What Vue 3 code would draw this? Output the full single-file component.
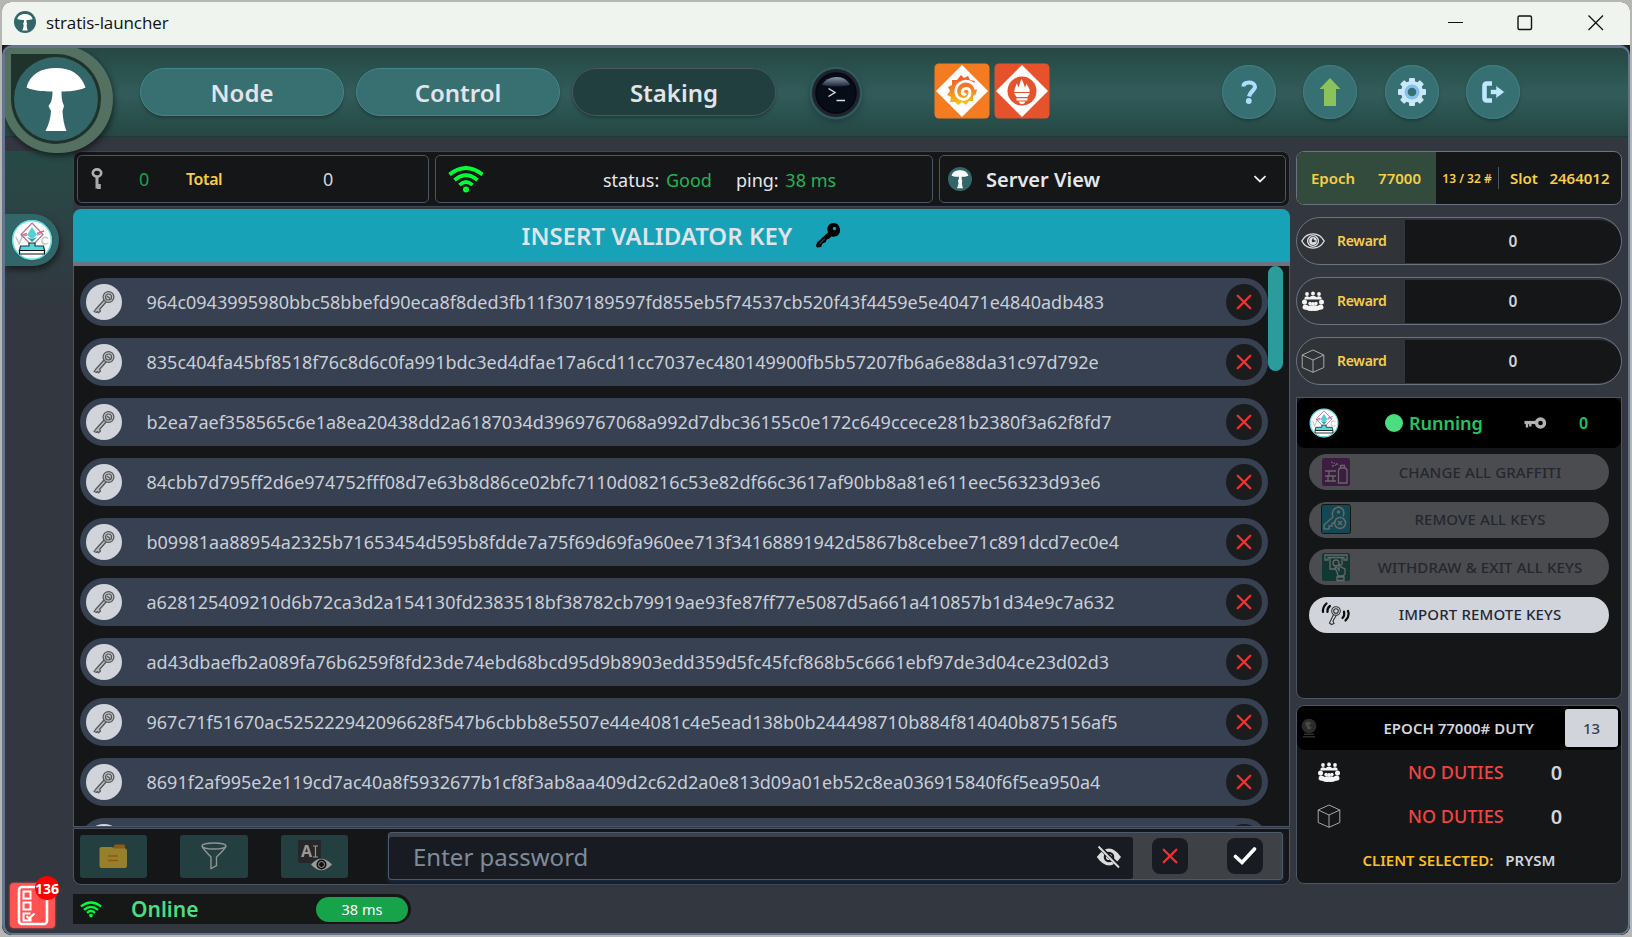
<script setup>
const keys = [
  '964c0943995980bbc58bbefd90eca8f8ded3fb11f307189597fd855eb5f74537cb520f43f4459e5e40471e4840adb483',
  '835c404fa45bf8518f76c8d6c0fa991bdc3ed4dfae17a6cd11cc7037ec480149900fb5b57207fb6a6e88da31c97d792e',
  'b2ea7aef358565c6e1a8ea20438dd2a6187034d3969767068a992d7dbc36155c0e172c649ccece281b2380f3a62f8fd7',
  '84cbb7d795ff2d6e974752fff08d7e63b8d86ce02bfc7110d08216c53e82df66c3617af90bb8a81e611eec56323d93e6',
  'b09981aa88954a2325b71653454d595b8fdde7a75f69d69fa960ee713f34168891942d5867b8cebee71c891dcd7ec0e4',
  'a628125409210d6b72ca3d2a154130fd2383518bf38782cb79919ae93fe87ff77e5087d5a661a410857b1d34e9c7a632',
  'ad43dbaefb2a089fa76b6259f8fd23de74ebd68bcd95d9b8903edd359d5fc45fcf868b5c6661ebf97de3d04ce23d02d3',
  '967c71f51670ac525222942096628f547b6cbbb8e5507e44e4081c4e5ead138b0b244498710b884f814040b875156af5',
  '8691f2af995e2e119cd7ac40a8f5932677b1cf8f3ab8aa409d2c62d2a0e813d09a01eb52c8ea036915840f6f5ea950a4',
  ''
]
const tabs = [
  { label: 'Node', active: false },
  { label: 'Control', active: false },
  { label: 'Staking', active: true }
]
const rewards = ['i-eye', 'i-group', 'i-cube']
const actions = [
  { label: 'CHANGE ALL GRAFFITI', icon: 'i-graffiti', off: true },
  { label: 'REMOVE ALL KEYS', icon: 'i-remove', off: true },
  { label: 'WITHDRAW & EXIT ALL KEYS', icon: 'i-withdraw', off: true },
  { label: 'IMPORT REMOTE KEYS', icon: 'i-remote', off: false }
]
</script>

<template>
  <div class="desktop">
    <svg class="defs" width="0" height="0">
      <defs>
        <linearGradient id="graf" x1="0" y1="0" x2="0" y2="1">
          <stop offset="0" stop-color="#ee5a2a" />
          <stop offset=".5" stop-color="#f1842a" />
          <stop offset="1" stop-color="#fbc70c" />
        </linearGradient>
        <linearGradient id="gloss" x1="0" y1="0" x2="0" y2="1">
          <stop offset="0" stop-color="#8d9bb0" />
          <stop offset="1" stop-color="#1b2433" />
        </linearGradient>
      </defs>
      <symbol id="i-shroom" viewBox="0 0 84 84">
        <circle cx="42" cy="42" r="42" fill="#336668" />
        <path fill="#fff" d="M12.500 30.500C16 17 27 11 42 11S67 17 71.500 30.500C64 34 55 34.500 47.500 34.500 47.500 39 48 43 48.500 45 L50 49 48.500 54C49 62 50 68 52.500 74H31.500C34.500 68 36.500 62 37 54L34.500 49 37 45C38 42 38.500 38 38.500 34.500 29 34.500 20 34 12.500 30.500Z" />
      </symbol>
      <symbol id="i-wifi" viewBox="0 0 36 27">
        <g fill="none" stroke="#0f3" stroke-width="3.700">
          <path d="M1.500 8.500Q18-4.500 34.500 8.500" />
          <path d="M6.500 14Q18 4.500 29.500 14" />
          <path d="M11.500 19Q18 13 24.500 19" />
        </g>
        <circle cx="18" cy="23.500" r="3" fill="#0f3" />
      </symbol>
      <symbol id="i-key" viewBox="0 0 24 24">
        <g fill="#b9bcc2" stroke="#555" stroke-width="1.200" stroke-linejoin="round">
          <path d="M12.500 9.500 14.500 11.500 7.500 19.500 8.500 21 6.500 22.800 5.500 21.500 4.500 22.500 2 21.500 3.500 19.500Z" />
          <circle cx="16.500" cy="7" r="5.400" />
          <circle cx="16.500" cy="7" r="3" fill="#c6c9cf" />
          <path d="M15 6 18 8.500" />
        </g>
      </symbol>
      <symbol id="i-vkey" viewBox="0 0 12 22">
        <path d="M6 8V20.500" stroke="#a9a9a9" stroke-width="3" fill="none" />
        <path d="M6 18.500h3.800" stroke="#a9a9a9" stroke-width="5" />
        <ellipse cx="6" cy="5" rx="4.200" ry="3.600" fill="none" stroke="#b0b0b0" stroke-width="2.600" />
      </symbol>
      <symbol id="i-hkey" viewBox="0 0 22 12">
        <path d="M.5 5.500H13" stroke="#b3b3b3" stroke-width="3.200" />
        <path d="M3 6v4.500M6.300 6v3.500" stroke="#b3b3b3" stroke-width="2.400" />
        <circle cx="16.500" cy="6" r="4" fill="none" stroke="#b3b3b3" stroke-width="3.400" />
      </symbol>
      <symbol id="i-x" viewBox="0 0 16 16">
        <path d="M1.700 1.700 14.300 14.300M14.300 1.700 1.700 14.300" stroke="#f5302f" stroke-width="2.300" fill="none" stroke-linecap="round" />
      </symbol>
      <symbol id="i-client" viewBox="0 0 42 42">
        <circle cx="21" cy="21" r="20.500" fill="#1c2c2e" />
        <circle cx="21" cy="21" r="19.400" fill="#fff" stroke="#62e0e2" stroke-width="1.600" />
        <path d="M21 4 32 15.500 21 27 10 15.500Z" fill="#fff" stroke="#b1748c" stroke-width="1.200" />
        <path d="M21 8 26 16 21 20 16 16Z" fill="#54cfd6" />
        <path d="M10 16.500 16 14.500M26 14.500 33 12" stroke="#d76b86" stroke-width="1.500" />
        <path d="M10.500 18 16 16M26 16 31 14.500" stroke="#8d8be0" stroke-width="1.200" />
        <path d="M16 18 21 23 26 18 21 20Z" fill="#2f9ea8" />
        <path d="M5 18 8 25 11 18M37 19.500c-4-3-6.500 0-6 3s3.500 3.500 6 1.500" fill="none" stroke="#c5c8cb" stroke-width="1.600" />
        <path d="M18 24h6v3h8.500l1 4.500h-25l1-4.500H18Z" fill="#55d9dc" stroke="#15383c" stroke-width="1.200" />
        <path d="M8.500 31.500h25v3.500h-25Z" fill="#fff" stroke="#111" stroke-width="1.200" />
      </symbol>
      <symbol id="i-eye" viewBox="0 0 24 24">
        <g fill="none" stroke="#dcdde0" stroke-width="1.400">
          <path d="M.8 12C6 2.500 18 2.500 23.200 12 18 21.500 6 21.500.8 12Z" />
          <circle cx="12" cy="12" r="5.400" />
          <circle cx="12" cy="12" r="2.600" stroke-width="2.600" />
        </g>
        <path d="M12 12V9.500M12 12h2.500" stroke="#303338" stroke-width="1.500" />
      </symbol>
      <symbol id="i-group" viewBox="0 0 24 24">
        <g fill="#f4f4f4">
          <circle cx="6" cy="5" r="1.900" /><circle cx="12" cy="4.500" r="1.900" /><circle cx="18" cy="5" r="1.900" />
          <path d="M3.500 10.500V8.500Q6 6 8.500 8.200 12 5.500 15.500 8.200 18 6 20.500 8.500V10.500Z" />
          <circle cx="3.500" cy="13" r="2.500" /><circle cx="20.500" cy="13" r="2.500" />
          <circle cx="9" cy="14.500" r="1.700" /><circle cx="15" cy="14.500" r="1.700" /><circle cx="12" cy="15" r="2" />
          <path d="M1.500 19Q1.500 15.500 4 15.500T7.500 17Q10 15.500 12 17.200 14 15.500 16.500 17 17.500 15.500 20 15.500T22.500 19Q22 21 19 20.800 15 22.500 12 21.800 9 22.500 5 20.800 2 21 1.500 19Z" />
        </g>
      </symbol>
      <symbol id="i-cube" viewBox="0 0 24 24">
        <g fill="none" stroke="#b4b6b9" stroke-width=".9" stroke-linejoin="round">
          <path d="M12 1 22.800 6V18.500L12 23.300 1.200 18.500V6Z" />
          <path d="M1.200 6 12 11 22.800 6M12 11V23.300" />
        </g>
      </symbol>
      <symbol id="i-graffiti" viewBox="0 0 30 30">
        <rect x="1" y="1" width="28" height="28" rx="2.500" fill="#84318a" />
        <g fill="none" stroke="#eee" stroke-width="1.300">
          <path d="M17.500 14Q17.500 11 20 11H23Q26 11 26 14V26H17.500ZM19.500 11V8.500h4V11" />
          <path d="M4 14h11M4 19h11M4 24h11M8 14v5M12 19v5M7 19v5" />
          <path d="M10 5l4 1.500M11 9l4-1M15 7h3" stroke-dasharray="2 1" />
        </g>
      </symbol>
      <symbol id="i-remove" viewBox="0 0 30 30">
        <rect x=".5" y=".5" width="29" height="29" rx="2" fill="#179fbd" stroke="#222" />
        <g fill="none" stroke="#eee" stroke-width="1.500" stroke-linejoin="round">
          <path d="M12 13Q10 7 14 4.500 18 1.500 21.500 5 24 8.500 22 12.500M12 13 3 21V25H8V22H11V19.500L14.500 18" />
          <circle cx="19" cy="19" r="5.500" />
          <path d="M17 17l4 4M21 17l-4 4" /><circle cx="17.500" cy="8" r="1" />
        </g>
      </symbol>
      <symbol id="i-withdraw" viewBox="0 0 30 30">
        <rect x="1" y="1" width="28" height="28" rx="2.500" fill="#17786a" />
        <g fill="none" stroke="#eee" stroke-width="1.300">
          <path d="M4 3H26V8H23V5.500H7V8H4ZM9 6V17H15M21 6V13" />
          <circle cx="15" cy="11" r="3" />
          <path d="M16 20 14 16Q15 14 18 18V13Q20 12 20 15L24 17V22L22 24H17ZM16 25h7v3.500h-7Z" />
        </g>
      </symbol>
      <symbol id="i-remote" viewBox="0 0 30 30">
        <g fill="none" stroke="#0b0b0b" stroke-linecap="round">
          <path d="M5.500 4.500Q1.500 8 2 13" stroke-width="2.200" />
          <path d="M9 7Q6 9 6.500 13" stroke-width="2.200" />
          <path d="M23 12.500Q24 16.500 21.500 19" stroke-width="2.200" />
          <path d="M27 12Q29 17 24.500 21.500" stroke-width="2.200" />
        </g>
        <g fill="#d1d5db" stroke="#333" stroke-width="1.100">
          <path d="M13 14.500 8.500 24 10.500 25.500 13 24.500 12 22 15.500 16Z" />
          <circle cx="15" cy="12" r="4.300" /><circle cx="15" cy="12" r="2.300" />
        </g>
      </symbol>
    </svg>

    <div class="window">
      <header class="titlebar">
        <svg class="ticon"><use href="#i-shroom" /></svg>
        <span class="tname">stratis-launcher</span>
        <svg class="winbtns" viewBox="0 0 160 20">
          <path d="M0 9.500H15" stroke="#111" stroke-width="1.200" />
          <rect x="70" y="3" width="13.500" height="13.500" rx="1.500" fill="none" stroke="#111" stroke-width="1.400" />
          <path d="M140.500 2.500 155 17M155 2.500 140.500 17" stroke="#111" stroke-width="1.300" />
        </svg>
      </header>

      <div class="app">
        <nav class="topnav">
          <div class="tabs">
            <button v-for="t in tabs" :key="t.label" class="tab" :class="{ active: t.active }">{{ t.label }}</button>
          </div>
          <svg class="term" viewBox="0 0 56 62">
            <circle cx="28" cy="28" r="26.500" fill="#2d5c5a" />
            <circle cx="28" cy="28" r="24" fill="#20222f" />
            <circle cx="28" cy="28" r="20" fill="#070d18" stroke="#05070d" stroke-width="1.500" />
            <path d="M14 20Q18 12.500 28 12T42 20Q28 23 14 20Z" fill="url(#gloss)" />
            <path d="M20.500 23.500 27 27.500 20.500 31.500M28.500 35.500h8.500" fill="none" stroke="#ddd" stroke-width="1.400" />
          </svg>
          <svg class="mon" viewBox="0 0 116 56">
            <rect x=".5" y=".5" width="55" height="55" rx="4.500" fill="#f47b20" />
            <path d="M28 2 54 28 28 54 2 28Z" fill="#fff" />
            <path d="M27 12 30 15 34 13 36 17 41 18 39 22 43 26 42 31 39 33 39 38 35 38 32 42 28 39 24 42 21 39 16 39 17 34 13 32 16 28 14 24 18 22 18 17 23 17Z" fill="url(#graf)" />
            <path d="M42 26.500C40 18 31 16 25.500 20.500S21 33 26 35.500 36 34.500 36 29.500 30 24 28.500 28 31 31.500 32 30.500" fill="none" stroke="#fff" stroke-width="2.800" />
            <rect x="60.500" y=".5" width="55" height="55" rx="4.500" fill="#e6522c" />
            <path d="M88 2 114 28 88 54 62 28Z" fill="#fff" />
            <circle cx="88" cy="28" r="14.500" fill="#e6522c" />
            <path d="M80.500 29C80 25 82 24 82.500 20.500 84 22 84.500 24 84.500 25 85.500 22 86 19 87.500 16 89.500 19 90 22 91 24.500 91.500 23 92 22 93 20.500 93 24 96.500 25 95.500 29Z" fill="#fff" />
            <path d="M80 30H96L93.500 34H82.500ZM82.500 35.200h11v2.200h-11ZM84.500 38.500h7Q90.500 41 88 41T84.500 38.500Z" fill="#fff" />
          </svg>
          <div class="rounds">
            <div class="round">
              <svg viewBox="0 0 54 54"><path d="M21.500 21.500C21.500 18.500 24 17.500 27 17.500S33 19 33 22 28.500 26 27 31.500" fill="none" stroke="#b0dcff" stroke-width="4.200" /><circle cx="26.800" cy="36" r="2.900" fill="#b0dcff" /></svg>
            </div>
            <div class="round">
              <svg viewBox="0 0 54 54"><path d="M27 13 37.500 24H33V41H21V24H16.500Z" fill="#8bc25a" /></svg>
            </div>
            <div class="round">
              <svg viewBox="0 0 54 54">
                <g fill="#cbe7fb"><circle cx="27" cy="27" r="11" />
                  <rect v-for="a in 4" :key="a" x="24" y="13" width="6" height="28" rx="1" :transform="`rotate(${a * 45} 27 27)`" />
                </g>
                <circle cx="27" cy="27" r="7.500" fill="#7fc3ee" /><circle cx="27" cy="27" r="4.300" fill="#377072" />
              </svg>
            </div>
            <div class="round">
              <svg viewBox="0 0 54 54"><path d="M26 18.500H21Q18.500 18.500 18.500 21V33Q18.500 35.500 21 35.500H26" fill="none" stroke="#bfe8ff" stroke-width="4.600" /><path d="M24.500 24.500H30V20.500L38.500 27 30 33.500V29.500H24.500Z" fill="#bfe8ff" stroke="#377072" stroke-width=".6" /></svg>
            </div>
          </div>
        </nav>
        <div class="biglogo"><div class="leaf"><svg><use href="#i-shroom" /></svg></div></div>

        <div class="body">
          <aside class="side">
            <div class="sidebadge"><svg><use href="#i-client" /></svg></div>
          </aside>

          <main class="main">
            <section class="stats">
              <div class="box b1">
                <svg class="vkey"><use href="#i-vkey" /></svg>
                <span class="g">0</span><span class="y">Total</span><span class="z">0</span>
              </div>
              <div class="box b2">
                <svg class="wifi"><use href="#i-wifi" /></svg>
                <p class="st">status: <b>Good</b></p>
                <p>ping: <b>38 ms</b></p>
              </div>
              <div class="box b3">
                <svg class="slogo"><use href="#i-shroom" /></svg>
                <span>Server View</span>
                <svg class="chev" viewBox="0 0 14 8"><path d="M1.500 1.200 7 6.500 12.500 1.200" fill="none" stroke="#eee" stroke-width="1.800" /></svg>
              </div>
            </section>

            <div class="insert">
              <span>INSERT VALIDATOR KEY</span>
              <svg viewBox="0 0 26 26">
                <path d="M2 20.500 13 10.500C11 5 14 1 18.500 1S25 4.500 25 8.500 21.500 15.500 16.500 14.500L13.500 17 11.500 17.500 11 20 7.500 21.500 6 25 2 25.500 1 24Z" fill="#000" />
                <circle cx="19.500" cy="6.500" r="1.700" fill="#17a2b8" /><path d="M4 22.500 10 16.500" stroke="#17a2b8" stroke-width=".8" />
              </svg>
            </div>

            <section class="list">
              <div class="rows">
                <div v-for="(k, i) in keys" :key="i" class="row">
                  <div class="kicon"><svg><use href="#i-key" /></svg></div>
                  <span>{{ k }}</span>
                  <div class="xicon"><svg><use href="#i-x" /></svg></div>
                </div>
              </div>
              <div class="thumb"></div>
            </section>

            <section class="bar">
              <div class="tool">
                <svg viewBox="0 0 68 43"><path d="M33 13 35 9.500H44Q45 9.500 45 11V14H33Z" fill="#8f5a16" /><path d="M19.500 14Q19.500 12 21.500 12H32L34 13.500H45Q47 13.500 47 15.500V31Q47 33 45 33H21.500Q19.500 33 19.500 31Z" fill="#96802c" /><path d="M28 21h10M28 25.500h10" stroke="#8a5a16" stroke-width="1.600" /></svg>
              </div>
              <div class="tool wide">
                <svg viewBox="0 0 68 43"><g fill="none" stroke="#8f9494" stroke-width="1.400"><ellipse cx="34" cy="11" rx="12" ry="3" /><path d="M22 11Q23 14 31 22V33.500L36.500 30.500V22Q45 14 46 11" /></g></svg>
              </div>
              <div class="tool">
                <svg viewBox="0 0 68 43"><rect x="17" y="5" width="23" height="23" rx="2" fill="#252728" /><path d="M32 11h5M34.500 11V22M32 22h5" stroke="#999" stroke-width="1.200" /><path d="M30 29.500Q40 18 51 29.500 40 41 30 29.500Z" fill="#9b9b9b" /><circle cx="40.500" cy="29.500" r="5" fill="#111" /><circle cx="40.500" cy="29.500" r="3" fill="none" stroke="#999" /></svg>
                <span>A</span>
              </div>
              <div class="pw">
                <div class="field">
                  <span>Enter password</span>
                  <svg viewBox="0 0 26 24"><path d="M.8 12Q7 3.500 13 3.500T25 12Q19 20.500 13 20.500T.8 12Z" fill="#dcdcdc" /><circle cx="13" cy="12" r="4.200" fill="none" stroke="#181c22" stroke-width="2.200" /><path d="M2.500 1 24 22" stroke="#181c22" stroke-width="4" /><path d="M2.500 1.500 23 22.500" stroke="#dcdcdc" stroke-width="1.900" /></svg>
                </div>
                <div class="pbtn"><svg class="px"><use href="#i-x" /></svg></div>
                <div class="pbtn ok"><svg viewBox="0 0 24 20"><path d="M2.500 10.500 9 16.500 21.500 3" fill="none" stroke="#fff" stroke-width="3.600" stroke-linecap="round" /></svg></div>
              </div>
            </section>

            <footer class="foot">
              <svg><use href="#i-wifi" /></svg>
              <span>Online</span>
              <div class="pill">38 ms</div>
            </footer>
          </main>

          <aside class="right">
            <div class="epoch">
              <div class="ep1"><span>Epoch</span><span>77000</span></div>
              <div class="ep2">13 / 32 #</div>
              <div class="ep3"><span>Slot</span><span>2464012</span></div>
            </div>
            <div v-for="r in rewards" :key="r" class="reward">
              <div class="rl"><svg><use :href="'#' + r" /></svg><span>Reward</span></div>
              <div class="rv">0</div>
            </div>
            <section class="panel">
              <div class="phead">
                <svg class="cl"><use href="#i-client" /></svg>
                <i class="dot"></i><span class="run">Running</span>
                <svg class="hk"><use href="#i-hkey" /></svg>
                <span class="cnt">0</span>
              </div>
              <div class="acts">
                <button v-for="a in actions" :key="a.label" class="act" :class="{ off: a.off }">
                  <svg><use :href="'#' + a.icon" /></svg><span>{{ a.label }}</span>
                </button>
              </div>
            </section>
            <section class="duty">
              <div class="dhead">
                <svg viewBox="0 0 16 20"><circle cx="8" cy="8" r="7.300" fill="#2b2b2b" /><path d="M4 5Q8 2 10 5L8 8 11 10 7 12" fill="#4a4a4a" /><path d="M3 15.500h10v1.500H3ZM2 18h12v1.500H2Z" fill="#2e2e2e" /></svg>
                <span>EPOCH 77000# DUTY</span>
                <div class="num">13</div>
              </div>
              <div class="drow"><svg><use href="#i-group" /></svg><span>NO DUTIES</span><b>0</b></div>
              <div class="drow"><svg><use href="#i-cube" /></svg><span>NO DUTIES</span><b>0</b></div>
              <div class="sel"><span>CLIENT SELECTED:</span><em>PRYSM</em></div>
            </section>
          </aside>
        </div>

        <div class="tasks">
          <svg viewBox="0 0 45 45"><rect width="45" height="45" rx="4" fill="#ff5252" />
            <rect x="9" y="4" width="28" height="37" rx="3" fill="none" stroke="#fff" stroke-width="2.600" />
            <g fill="none" stroke="#fff" stroke-width="2"><rect x="13.500" y="8.500" width="7" height="7" /><rect x="13.500" y="19.500" width="7" height="7" /><path d="M20.500 30.500H13.500V37.500H20.500V34M16.500 33 19 35.500 24.500 30.500" /></g>
          </svg>
          <span>136</span>
        </div>
      </div>
    </div>
  </div>
</template>

<style>
body { margin: 0; overflow: hidden; }
</style>
<style scoped>
* { box-sizing: border-box; margin: 0; }
svg { display: block; flex: none; }
button { border: 0; padding: 0; font: inherit; }
.defs { position: absolute; }
.desktop { width: 1632px; height: 937px; background: #b6b6b4; padding: 2px; font-family: "Noto Sans", sans-serif; color: #e5e5e5; }
.window { height: 933px; width: 1628px; display: flex; flex-direction: column; border-radius: 9px; overflow: hidden; background: #1c1f22; }
.titlebar { height: 43px; flex: none; background: #eff4ee; display: flex; align-items: center; padding: 0 27px 3px 12px; color: #111; }
.ticon { width: 22px; height: 22px; }
.tname { margin-left: 10px; font-size: 17px; letter-spacing: -.1px; font-family: "Open Sans", "Noto Sans", sans-serif; }
.winbtns { width: 160px; height: 20px; margin: 1px -5px 0 auto; }
.app { position: relative; flex: 1; border: 3px solid #66758e; border-bottom-width: 2px; border-right-width: 2px; border-radius: 10px; background: #33373f; overflow: hidden; display: flex; flex-direction: column; }
.topnav { height: 89px; flex: none; display: flex; align-items: center; padding-left: 135px; border-bottom: 1px solid #1f3a38; background: linear-gradient(#274744, #29504c 20%, #325c5a 52%, #29504c 80%, #274744); }
.tabs { display: flex; gap: 12px; }
.tab { width: 204px; height: 48px; border-radius: 24px; background: #387072; border: 1px solid #45868a; color: #e2e4ea; font-weight: 600; font-size: 24px; box-shadow: 0 2px 3px rgba(0,0,0,.25); }
.tab.active { background: #213f3f; border-color: #4b5563; }
.term { width: 56px; height: 62px; margin: 7px 0 0 32px; filter: drop-shadow(0 3px 3px rgba(30,40,60,.5)); }
.mon { width: 116px; height: 56px; margin: -2px 0 0 70px; }
.rounds { display: flex; gap: 27.300px; margin-left: 172px; margin-top: -1px; }
.round { width: 54px; height: 54px; border-radius: 50%; background: #377072; box-shadow: inset 0 0 0 1px #427f82, 0 2px 3px rgba(0,0,0,.25); }
.round svg { width: 54px; height: 54px; }
.biglogo { position: absolute; left: -3px; top: -3px; width: 111px; height: 108px; background: #547060; border-radius: 10px 54px 54px 54px; padding: 9px; box-shadow: 1px 3px 6px rgba(0,0,0,.55); }
.leaf { width: 90px; height: 90px; background: #1f332a; border-radius: 0 45px 45px 45px; padding: 3px; }
.leaf svg { width: 84px; height: 84px; }
.body { flex: 1; display: flex; }
.side { width: 68px; margin-top: 14px; height: 770px; background: linear-gradient(#274a47, #33373f 165px); padding-top: 63px; }
.sidebadge { width: 54px; height: 52px; background: #336668; border-radius: 0 26px 26px 0; padding: 5px 6px; box-shadow: 1px 4px 6px rgba(0,0,0,.5); }
.sidebadge svg { width: 42px; height: 42px; }
.main { width: 1217px; padding-top: 14px; display: flex; flex-direction: column; }
.stats { height: 56px; flex: none; border: 1px solid #3f4652; border-radius: 8px; background: #151618; display: flex; gap: 6px; padding: 3px; }
.box { height: 48px; flex: none; border: 1px solid #4b5563; border-radius: 5px; display: flex; align-items: center; font-size: 18px; color: #d1d5db; }
.b1 { width: 352px; }
.vkey { width: 12px; height: 22px; margin-left: 13px; }
.b1 .g { width: 12px; margin-left: 36px; color: #16a34a; }
.b1 .y { margin-left: 35px; font-size: 16px; font-weight: 600; letter-spacing: -.4px; color: #f6ce48; width: 60px; }
.b1 .z { margin-left: 77px; }
.b2 { width: 498px; color: #e5e7eb; }
.wifi { width: 36px; height: 27px; margin-left: 12px; }
.b2 p { margin-top: 1px; }
.b2 b { font-weight: 400; color: #22b455; margin-left: 2px; }
.b2 .st { margin-left: 119px; margin-right: 24px; }
.b3 { width: 347px; }
.slogo { width: 24px; height: 24px; margin-left: 8px; }
.b3 span { margin-left: 14px; margin-top: 1px; font-size: 20px; font-weight: 600; color: #e5e7eb; }
.chev { width: 14px; height: 8px; margin-left: auto; margin-right: 18px; }
.insert { height: 57px; flex: none; margin-top: 2px; border-radius: 8px 8px 0 0; background: #17a2b8; border-bottom: 4px solid #6b7280; display: flex; align-items: center; padding-left: 448.500px; font-size: 24px; font-weight: 600; color: #dfe3ea; }
.insert svg { width: 26px; height: 26px; margin-left: 23px; margin-top: -2px; }
.list { position: relative; flex: none; height: 561px; border: 1px solid #4b5563; border-top: 0; background: #151618; overflow: hidden; }
.rows { padding: 12px 0 0 6px; display: flex; flex-direction: column; gap: 12px; }
.row { width: 1188px; height: 48px; flex: none; border-radius: 24px; background: #384152; display: flex; align-items: center; padding: 0 6px; font-size: 18px; color: #c9ced6; }
.kicon { width: 36px; height: 36px; border-radius: 50%; background: #d1d5db; padding: 6px; }
.kicon svg { width: 24px; height: 24px; }
.row span { margin-left: 24.500px; flex: 1; white-space: nowrap; }
.xicon { width: 36px; height: 36px; border-radius: 50%; background: #1b1c1e; display: grid; place-items: center; }
.xicon svg { width: 16px; height: 16px; }
.thumb { position: absolute; right: 6px; top: 0; width: 15px; height: 105px; border-radius: 8px; background: #2c9b9c; }
.bar { height: 57px; flex: none; margin-top: 1px; border: 1px solid #4b5563; border-radius: 0 0 8px 8px; background: #151618; display: flex; padding: 3px 6px; }
.tool { position: relative; flex: none; width: 67px; height: 43px; margin: 3px 33px 0 0; border-radius: 3px; background: #243f40; }
.tool.wide { width: 68px; }
.tool svg { width: 68px; height: 43px; }
.tool span { position: absolute; left: 20px; top: 5px; font: 700 16px "Noto Sans", sans-serif; color: #999; }
.pw { width: 895px; flex: none; height: 48px; margin-left: 7px; border: 1px solid #4b5b6b; border-radius: 3px; background: #3e4246; display: flex; align-items: center; box-shadow: 0 3px 4px #1a2a3c; }
.field { width: 744px; height: 42px; margin-top: 3px; border-radius: 3px; background: #181c22; display: flex; align-items: center; justify-content: space-between; padding: 0 11px 2px 24px; font-size: 24px; color: #808b99; }
.field svg { width: 26px; height: 24px; }
.pbtn { width: 36px; height: 36px; margin-left: 19px; border-radius: 8px; background: #181c22; display: grid; place-items: center; }
.pbtn.ok { margin-left: 39px; }
.px { width: 16px; height: 16px; }
.ok svg { width: 24px; height: 20px; }
.foot { width: 338px; height: 30px; flex: none; margin-top: 9px; border-radius: 0 15px 15px 0; background: #161818; display: flex; align-items: center; padding-left: 7px; }
.foot svg { width: 22px; height: 19px; }
.foot span { margin-left: 29px; font-size: 21px; font-weight: 600; color: #4ade80; }
.pill { width: 92px; height: 25px; margin: 0 3px 0 auto; border-radius: 13px; background: #16a34a; color: #fff; font-size: 14.500px; display: grid; place-items: center; }
.right { width: 326px; margin-left: 6px; padding-top: 14px; }
.epoch { height: 54px; border: 1px solid #6b7280; border-radius: 8px; background: #151618; overflow: hidden; display: flex; font-size: 15px; font-weight: 600; color: #f6ce48; }
.ep1 { width: 139px; background: #334b3d; display: flex; align-items: center; justify-content: space-between; padding: 0 15px 1px 14px; }
.ep2 { width: 63px; font-size: 12px; align-self: center; height: 22px; display: grid; place-items: center; border-right: 1px solid #4b5563; white-space: nowrap; }
.ep3 { flex: 1; display: flex; align-items: center; justify-content: space-between; padding: 0 11.500px 1px 11px; }
.reward { height: 48px; margin-top: 12px; border: 1px solid #6b7280; border-radius: 24px; background: #303338; overflow: hidden; display: flex; padding: 2px 0 1px; font-weight: 600; }
.rl { width: 108px; display: flex; align-items: center; padding: 0 0 2px 4px; font-size: 14px; color: #f6ce48; }
.rl svg { width: 24px; height: 24px; }
.rl span { margin-left: 12px; letter-spacing: -.3px; }
.rv { flex: 1; background: #151618; border-radius: 0 22px 22px 0; display: grid; place-items: center; font-size: 15.500px; color: #d1d5db; padding-bottom: 2px; }
.panel { height: 302px; margin-top: 12px; border: 1px solid #4b5563; border-radius: 0 0 8px 8px; background: #151618; }
.phead { height: 50px; border-radius: 8px; background: #000; display: flex; align-items: center; color: #22c55e; font-weight: 600; }
.cl { width: 30px; height: 30px; margin-left: 12px; }
.dot { width: 18px; height: 18px; margin-left: 46px; border-radius: 50%; background: #4ade80; }
.run { width: 109px; margin-left: 6px; font-size: 18px; }
.hk { width: 22px; height: 12px; margin-left: 6px; }
.cnt { margin-left: 33px; font-size: 16px; }
.acts { display: flex; flex-direction: column; gap: 11.600px; padding: 6px 12px; }
.act { width: 300px; height: 36px; border-radius: 18px; background: #d1d5db; display: flex; align-items: center; padding: 0 0 1px 12px; font-size: 15px; font-weight: 500; color: #1f2937; }
.act.off { background: #4b4c4f; color: #24272f; }
.act svg { width: 30px; height: 30px; }
.act.off svg { opacity: .88; filter: brightness(.45); }
.act span { width: 262px; text-align: center; white-space: nowrap; letter-spacing: .13px; }
.duty { height: 179px; margin-top: 6px; border: 1px solid #4b5563; border-radius: 8px; background: #151618; }
.dhead { height: 44px; border-radius: 8px; background: #000; display: flex; align-items: center; padding: 0 3px 0 4px; font-size: 15px; font-weight: 600; color: #d1d5db; }
.dhead svg { width: 16px; height: 20px; }
.dhead span { margin-left: 66.500px; padding-bottom: 1px; white-space: nowrap; }
.num { margin-left: auto; width: 53px; height: 38px; border-radius: 3px; background: #d1d5db; color: #374151; display: grid; place-items: center; font-weight: 500; padding-bottom: 1px; }
.drow { height: 44px; display: flex; align-items: center; padding-left: 20px; color: #ef4444; font-size: 18px; font-weight: 500; }
.drow svg { width: 24px; height: 24px; }
.drow span { width: 127px; margin-left: 51px; padding-left: 16px; }
.drow b { margin-left: 23.500px; width: 28px; text-align: center; font-size: 20px; font-weight: 600; color: #d1d5db; }
.sel { height: 44px; display: flex; align-items: center; justify-content: center; gap: 12px; font-size: 15px; font-weight: 600; color: #fbbf24; }
.sel em { font-style: normal; color: #d1d5db; }
.tasks { position: absolute; left: 5px; top: 835px; width: 45px; }
.tasks svg { width: 45px; height: 45px; filter: drop-shadow(0 0 1px #ff5252); }
.tasks span { position: absolute; left: 25px; top: -7px; width: 24px; height: 24px; border-radius: 50%; background: #f00; color: #fff; font-size: 14px; font-weight: 700; display: grid; place-items: center; }
</style>
